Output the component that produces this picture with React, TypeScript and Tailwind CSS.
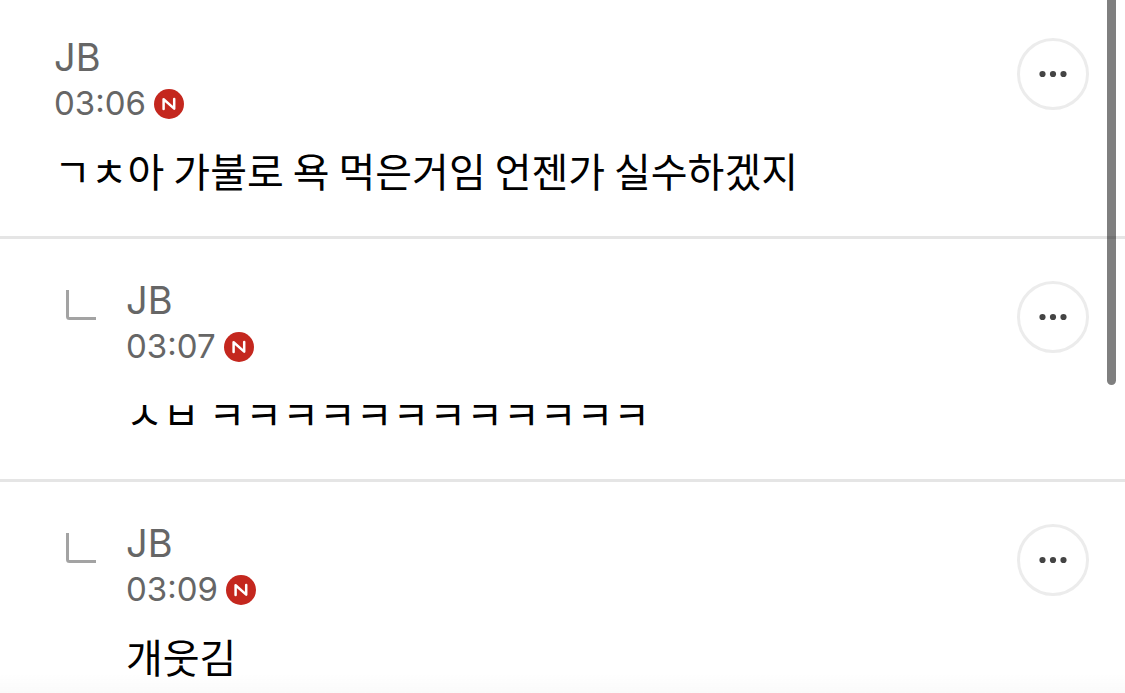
import React from 'react';

interface Comment {
  id: number;
  author: string;
  time: string;
  text: string;
  reply?: boolean;
}

const comments: Comment[] = [
  { id: 1, author: 'JB', time: '03:06', text: 'ㄱㅊ아 가불로 욕 먹은거임 언젠가 실수하겠지' },
  { id: 2, author: 'JB', time: '03:07', text: 'ㅅㅂ ㅋㅋㅋㅋㅋㅋㅋㅋㅋㅋㅋㅋ', reply: true },
  { id: 3, author: 'JB', time: '03:09', text: '개웃김', reply: true },
];

const NewBadge: React.FC = () => (
  <svg className="size-[30px] shrink-0" viewBox="0 0 30 30" role="img" aria-label="New">
    <circle cx="15" cy="15" r="15" fill="#c4271e" />
    <path
      d="M9.6 19.9V10.2L20.2 19.6V9.9"
      fill="none"
      stroke="#fff"
      strokeWidth="2.5"
      strokeLinecap="round"
      strokeLinejoin="round"
    />
  </svg>
);

const ReplyMark: React.FC = () => (
  <svg className="mt-2 ml-3 h-8 w-[30px] shrink-0" viewBox="0 0 30 32" aria-hidden="true">
    <path d="M1.5 1V27.5Q1.5 29.5 3.5 29.5H30" fill="none" stroke="#a3a3a3" strokeWidth="3" />
  </svg>
);

const CommentRow: React.FC<{ comment: Comment }> = ({ comment }) => (
  <li className="flex min-h-[243px] items-start border-b-3 border-[#e5e5e5] pt-[42px] pr-9 pl-[54px]">
    {comment.reply && (
      <div className="w-[72px] shrink-0">
        <ReplyMark />
      </div>
    )}
    <div className="min-w-0 flex-1 pt-px">
      <div className="text-[38px] leading-9 text-[#666]">{comment.author}</div>
      <div className="mt-[5px] flex h-12 items-center gap-2 text-[33px] text-[#666] [font-feature-settings:'case']">
        <time>{comment.time}</time>
        <NewBadge />
      </div>
      <p className="mt-[14px] font-['Noto_Sans_CJK_KR',sans-serif] text-[40px] leading-14 text-black">
        {comment.text}
      </p>
    </div>
    <button
      type="button"
      aria-label="More"
      className="flex size-[72px] shrink-0 items-center justify-center rounded-full border-3 border-[#ececec] bg-white"
    >
      <svg className="h-2 w-7" viewBox="0 0 28 8" fill="#444">
        <circle cx="3.5" cy="4" r="3.1" />
        <circle cx="14" cy="4" r="3.1" />
        <circle cx="24.5" cy="4" r="3.1" />
      </svg>
    </button>
  </li>
);

const App: React.FC = () => (
  <main className="relative h-screen overflow-hidden bg-white font-['Inter','Noto_Sans_CJK_KR',sans-serif]">
    <ul className="-mt-1">
      {comments.map(c => <CommentRow key={c.id} comment={c} />)}
    </ul>
    {/* scroll thumb */}
    <div className="absolute top-0 right-[9px] h-[385px] w-[9px] rounded-b-full bg-black/50" />
    {/* soft shade above the bottom bar */}
    <div className="pointer-events-none absolute inset-x-0 bottom-0 h-5 bg-linear-to-b from-transparent to-black/2" />
  </main>
);

export default App;
